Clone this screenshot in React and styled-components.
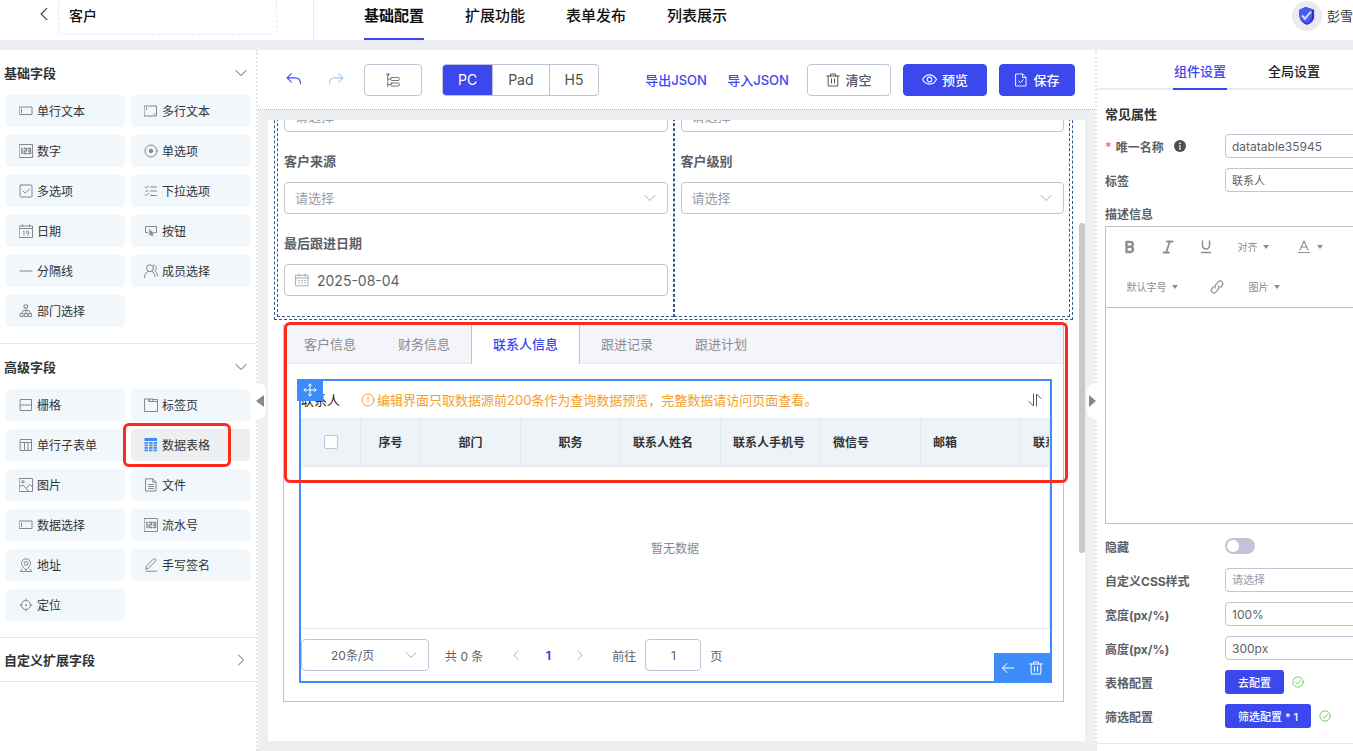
import React, { useState } from "react";
import styled, { createGlobalStyle, css } from "styled-components";

const GlobalStyle = createGlobalStyle`
  *, *::before, *::after {
    box-sizing: border-box;
  }
  body {
    margin: 0;
    font-family: Inter, "Noto Sans CJK SC", sans-serif;
    font-size: 13px;
    color: #303338;
    background: #eeeff4;
  }
  button, input, select, textarea {
    font: inherit;
    color: inherit;
  }
  button {
    padding: 0;
    border: 0;
    background: none;
    cursor: pointer;
  }
`;

const blue = "#3a48ee";
const line = "#c0c4d6";

/* ---------- icons ---------- */

const Svg = styled.svg`
  flex: none;
  display: block;
  fill: none;
  stroke: currentColor;
  stroke-width: ${({ $w }) => $w || 1};
  stroke-linecap: round;
  stroke-linejoin: round;
`;

const icons = {
  input: (
    <>
      <rect x="0.500" y="3" width="12.500" height="7.500" />
      <path d="M2.500 5v3.500" />
    </>
  ),
  textarea: (
    <>
      <rect x="0.500" y="2" width="12" height="10" />
      <path d="M2.500 4v1.500M10 10.500l1-1" />
    </>
  ),
  number: (
    <>
      <rect x="0.500" y="0.500" width="13" height="13" />
      <path strokeWidth="1.400" d="M2.500 4.500h.5v5M5.200 4.500h2.400v2.400H5.200v2.600h2.400M9.300 4.500h2.200v5H9.300M9.600 7h1.900" />
    </>
  ),
  radio: (
    <>
      <circle cx="7" cy="7" r="6" />
      <circle cx="7" cy="7" r="1.700" fill="currentColor" />
    </>
  ),
  checkbox: (
    <>
      <rect x="1" y="1" width="12" height="12" rx="1" />
      <path d="M4 7l2.200 2.200L10.500 5" />
    </>
  ),
  options: <path d="M6.500 3h6M6.500 7h6M6.500 11.500h6M1 3l1.200 1.200L4.500 2M1 10.500l1.200 1.200 2.300-2.300M2 7h2" />,
  date: (
    <>
      <path d="M.5 2h13v11.500H.5zM.5 4.500h13M3.500 .8v1.700M10.500 .8v1.700" />
      <path strokeWidth="0.900" d="M4.200 7.500l.8-.6v4.500M9.800 8.200a1.200 1.200 0 1 1-2.400 0 1.200 1.200 0 0 1 2.400 0c0 1.400-.5 2.800-1.700 3.200" />
    </>
  ),
  button: (
    <>
      <path d="M3.500 8.500H1.500v-6h11v6h-2" />
      <path fill="currentColor" strokeWidth="0.500" d="M5.500 5.500l4.300 3.800-1.600.3.800 2-1.300.5-.9-2-1.300.9z" />
    </>
  ),
  divider: <path strokeWidth="1.200" d="M1 7h12" />,
  user: (
    <>
      <circle cx="6" cy="4.200" r="3.400" />
      <path d="M.5 13.500c0-3.300 1.700-5.700 3.800-6M7.800 7.300c2 .6 3.200 2.700 3.200 5M9.500 1c2 .4 2.900 1.700 2.700 3.400-.1 1.100-.7 1.900-1.500 2.300 1.700.9 2.700 2.800 2.800 5.300" />
    </>
  ),
  org: (
    <>
      <rect x="5.500" y="1" width="3" height="3" />
      <rect x="1.500" y="9.500" width="2.500" height="3" />
      <rect x="5.700" y="9.500" width="2.500" height="3" />
      <rect x="10" y="9.500" width="2.500" height="3" />
      <path d="M7 4v5.500M2.700 9.500L4 6.500h6l1.300 3" />
    </>
  ),
  grid: <path d="M1.500 1.500h11v11h-11zM1.500 7h11" />,
  tabs: <path d="M.5 3.500v10h13v-10H5l-.5-2.500h-4zM5 3.500V1h4v2.500M9 1.500h4.500v2" />,
  subform: <path d="M1.500 1.500h11v11h-11zM1.500 4.500h11M5.500 4.500v8M9 4.500v8" />,
  image: (
    <>
      <rect x="0.500" y="0.500" width="13" height="13" />
      <circle cx="3.800" cy="3.800" r="1.200" />
      <path d="M.5 8.500L4 7l5.500 6M7.500 10.200l3-3.700 3 2.500" />
    </>
  ),
  file: <path d="M2 .8h7l3 3.200v9H2zM8.800 1v3.200H12M4.500 6.500h5M4.500 8.500h5M4.500 10.500h5" />,
  address: (
    <>
      <path d="M7 12C4 9.500 2.500 7.600 2.500 5.300a4.500 4.500 0 0 1 9 0C11.500 7.600 10 9.500 7 12zM3 11l-1.800 2.500h11.600L11 11" />
      <circle cx="7" cy="5.400" r="1.900" />
    </>
  ),
  sign: <path d="M1.800 10.800l.7-3L9.600 .9c.9-.8 2.900.8 2.100 2L4.700 10zM2 13.200h10.500" />,
  locate: (
    <>
      <circle cx="7" cy="7" r="4.600" />
      <circle cx="7" cy="7" r="0.400" />
      <path d="M7 1v2M7 11v2M1 7h2M11 7h2" />
    </>
  ),
  undo: <path d="M5 1.500L1 5.500l4 4M1 5.500h7.500c3 0 5 2 5 5.500" />,
  redo: <path d="M9 1.500l4 4-4 4M13 5.500H5.500c-3 0-5 2-5 5.500" />,
  tree: (
    <>
      <circle cx="1.800" cy="1.500" r="1.100" />
      <path d="M1.800 2.600v11M1.800 6h3M1.800 11.500h3" />
      <rect x="4.800" y="4.500" width="8.500" height="3" rx="1" />
      <rect x="4.800" y="10" width="8.500" height="3" rx="1" />
    </>
  ),
  trash: <path d="M.8 3h12.400M4.500 3V1h5v2M2.200 3v10h9.600V3M5.500 5.800v4.400M8.500 5.800v4.400" />,
  eye: (
    <>
      <path d="M.5 7C2 4.300 4.300 2.700 7 2.700S12 4.300 13.500 7c-1.500 2.700-3.800 4.300-6.500 4.300S2 9.700.5 7z" />
      <circle cx="7" cy="7" r="2.200" />
    </>
  ),
  save: <path d="M2 1h6.500L12 4.500V13H2zM8.500 1v3.500H12M4.700 8l1.700 1.700 3-3" />,
  calendar: (
    <path d="M1 2.200h12v10.600H1zM1 5h12M4 1v2.200M10 1v2.200M3.800 7.500h.9M6.600 7.500h.9M9.400 7.500h.9M3.800 10h.9M6.600 10h.9M9.400 10h.9" />
  ),
  warn: (
    <>
      <circle cx="7" cy="7" r="6" />
      <path d="M7 3.500v4.500M7 10v.2" />
    </>
  ),
  sort: <path d="M5.500 1v12L1 8.500M8.500 13V1L13 5.500" />,
  move: (
    <path d="M7 1v12M1 7h12M5.500 2.500L7 1l1.500 1.500M5.500 11.500L7 13l1.500-1.500M2.500 5.500L1 7l1.500 1.500M11.500 5.500L13 7l-1.500 1.500" />
  ),
  back: <path d="M12.500 7h-11M6 2.500L1.500 7 6 11.500" />,
  success: (
    <>
      <circle cx="7" cy="7" r="6" />
      <path d="M4.200 7.200l2 2 3.600-3.800" />
    </>
  ),
  link: (
    <path d="M5.800 8.200a2.600 2.600 0 0 1 0-3.600l2.500-2.700a2.500 2.500 0 0 1 3.700 3.600L10.600 7M8.200 5.800a2.600 2.600 0 0 1 0 3.600l-2.500 2.700A2.500 2.500 0 0 1 2 8.500L3.400 7" />
  ),
  down: <path d="M2 4.500l5 5 5-5" />,
  right: <path d="M4.500 2l5 5-5 5" />,
  left: <path d="M9.500 2l-5 5 5 5" />,
};

const Icon = ({ name, size = 14, w }) => (
  <Svg width={size} height={size} viewBox="0 0 14 14" $w={w} aria-hidden="true">
    {icons[name]}
  </Svg>
);

const TableIcon = () => (
  <svg width="14" height="14" viewBox="0 0 14 14" fill="#3e8bfa" aria-hidden="true">
    <rect x="0.500" y="0" width="12.500" height="3" />
    {[4, 6.5, 9, 11.500].map((y) =>
      [0.5, 5, 9.500].map((x) => <rect key={`${x}-${y}`} x={x} y={y} width="3.500" height="1.800" />)
    )}
  </svg>
);

const Shield = () => (
  <svg width="18" height="20" viewBox="0 0 18 20" aria-hidden="true">
    <path d="M11 2l6 1.500v8c0 3-2 5-5 6.500z" fill="#c9d2ee" />
    <path d="M7.500 1L16 3.800v7c0 4-3.500 6.800-7 8.200C4.500 17 2 14.500 1.500 11L1 4z" fill="#2a33c9" />
    <path d="M7.500 1L14 3.200v7.300c0 3.200-2.500 5.500-5 6.800C4.500 15.500 2 13.500 1.500 11L1 4z" fill="#4a5cf0" />
    <path d="M4 9.500l3 3.200 6-7" fill="none" stroke="#d5ddff" strokeWidth="2" />
  </svg>
);

/* ---------- page ---------- */

const Page = styled.div`
  display: flex;
  flex-direction: column;
  height: 100vh;
  overflow: hidden;
`;

const Header = styled.header`
  display: flex;
  flex: none;
  height: 40px;
  margin-bottom: 10px;
  background: #fff;
`;

const TitleArea = styled.div`
  display: flex;
  align-items: flex-start;
  gap: 6px;
  width: 314px;
  padding-left: 36px;
  border-right: 1px solid #e8eaf0;
`;

const BackButton = styled.button`
  height: 28px;
  color: #44474d;
`;

const TitleInput = styled.input`
  width: 219px;
  height: 35px;
  padding: 0 10px 4px;
  border: 1px dashed #e6e8ee;
  border-top: 0;
  border-radius: 0 0 5px 5px;
  outline: none;
  font-size: 14px;
  font-weight: 500;
  color: #111;
`;

const MainTabs = styled.nav`
  display: flex;
  gap: 41px;
  padding-left: 50px;
`;

const MainTab = styled.a`
  height: 40px;
  padding-top: 4px;
  line-height: 23px;
  font-size: 15px;
  font-weight: ${({ $active }) => ($active ? 700 : 500)};
  color: #111;
  text-decoration: none;
  border-bottom: 2px solid ${({ $active }) => ($active ? blue : "transparent")};
`;

const User = styled.div`
  display: flex;
  align-items: center;
  gap: 5px;
  height: 31px;
  margin-left: auto;
  white-space: nowrap;
`;

const Avatar = styled.span`
  display: flex;
  align-items: center;
  justify-content: center;
  width: 30px;
  height: 30px;
  border-radius: 50%;
  background: #ebebed;
`;

const Body = styled.div`
  display: flex;
  flex: 1;
  min-height: 0;
`;

/* ---------- left panel ---------- */

const Sidebar = styled.aside`
  flex: none;
  width: 258px;
  background: #fff;
  border-right: 2px dotted #e2e4f0;
`;

const Section = styled.section`
  border-bottom: 1px solid #e4e6f0;
  padding-bottom: ${({ $open }) => ($open ? 16 : 0)}px;
`;

const SectionHead = styled.button`
  display: flex;
  align-items: center;
  justify-content: space-between;
  width: 100%;
  height: ${({ $open }) => ($open ? 45 : 43)}px;
  padding: 0 8px 0 4px;
  font-weight: 700;
  svg {
    color: #55585e;
  }
`;

const FieldGrid = styled.div`
  display: grid;
  grid-template-columns: 1fr 1fr;
  gap: 8px 6px;
  padding: 0 6px;
`;

const FieldSlot = styled.div`
  position: relative;
`;

const Field = styled.button`
  display: flex;
  align-items: center;
  gap: 4px;
  width: 100%;
  height: 32px;
  padding: 0 0 1px 13px;
  border-radius: 4px;
  font-size: 12px;
  background: ${({ $active }) => ($active ? "#eeeff1" : "#f1f7fb")};
  svg {
    color: #85888f;
  }
`;

const Mark = styled.div`
  position: absolute;
  z-index: 3;
  border: 3px solid #fa2c1f;
  border-radius: 6px;
  pointer-events: none;
`;

const FieldMark = styled(Mark)`
  top: -6px;
  left: -8px;
  width: 108px;
  height: 44px;
`;

const basicFields = [
  ["input", "单行文本"],
  ["textarea", "多行文本"],
  ["number", "数字"],
  ["radio", "单选项"],
  ["checkbox", "多选项"],
  ["options", "下拉选项"],
  ["date", "日期"],
  ["button", "按钮"],
  ["divider", "分隔线"],
  ["user", "成员选择"],
  ["org", "部门选择"],
];

const advancedFields = [
  ["grid", "栅格"],
  ["tabs", "标签页"],
  ["subform", "单行子表单"],
  ["datatable", "数据表格"],
  ["image", "图片"],
  ["file", "文件"],
  ["input", "数据选择"],
  ["number", "流水号"],
  ["address", "地址"],
  ["sign", "手写签名"],
  ["locate", "定位"],
];

const FieldSection = ({ title, fields }) => {
  const [open, setOpen] = useState(Boolean(fields));
  const shown = open && fields;
  return (
    <Section $open={shown}>
      <SectionHead $open={shown} onClick={() => setOpen(!open)}>
        {title}
        <Icon name={shown ? "down" : "right"} />
      </SectionHead>
      {shown && (
        <FieldGrid>
          {fields.map(([icon, label]) => (
            <FieldSlot key={label}>
              <Field $active={icon === "datatable"}>
                {icon === "datatable" ? <TableIcon /> : <Icon name={icon} />}
                {label}
              </Field>
              {icon === "datatable" && <FieldMark />}
            </FieldSlot>
          ))}
        </FieldGrid>
      )}
    </Section>
  );
};

/* ---------- designer ---------- */

const Designer = styled.main`
  position: relative;
  display: flex;
  flex-direction: column;
  flex: 1;
  min-width: 0;
  background: #eeeff1;
`;

const Toolbar = styled.div`
  display: flex;
  align-items: center;
  gap: 20px;
  flex: none;
  height: 60px;
  padding: 0 20px 0 28px;
  background: #fff;
  border-bottom: 1px dotted #b4b7c0;
`;

const History = styled.div`
  display: flex;
  gap: 28px;
`;

const IconButton = styled.button`
  color: ${({ $off }) => ($off ? "#a0cbfb" : blue)};
`;

const Button = styled.button`
  display: flex;
  align-items: center;
  justify-content: center;
  gap: 5px;
  width: ${({ $width }) => $width}px;
  height: 32px;
  border: 1px solid ${line};
  border-radius: 4px;
  font-weight: 500;
  color: #55585e;
  ${({ $primary }) =>
    $primary &&
    css`
      color: #fff;
      background: ${blue};
      border-color: ${blue};
    `}
`;

const DeviceGroup = styled.div`
  display: flex;
  height: 32px;
  border: 1px solid ${line};
  border-radius: 4px;
  overflow: hidden;
`;

const Device = styled.button`
  padding: 0 15px;
  font-size: 14px;
  color: #4c4f56;
  & + & {
    border-left: 1px solid ${line};
  }
  ${({ $active }) =>
    $active &&
    css`
      color: #fff;
      background: ${blue};
    `}
`;

const Actions = styled.div`
  display: flex;
  align-items: center;
  gap: 12px;
  margin-left: auto;
`;

const TextButton = styled.button`
  min-width: 66px;
  margin-right: 4px;
  font-weight: 500;
  color: ${blue};
`;

const Canvas = styled.div`
  position: relative;
  flex: 1;
  min-height: 0;
  margin: 10px;
  padding: 0 12px 0 6px;
  background: #fff;
  overflow: hidden;
`;

const ScrollThumb = styled.div`
  position: absolute;
  top: 103px;
  right: 0;
  width: 6px;
  height: 330px;
  border-radius: 3px;
  background: #c9c9c9;
`;

/* the form is scrolled down by 30px */
const FormGrid = styled.div`
  display: grid;
  grid-template-columns: 1fr 1fr;
  margin-top: -30px;
  padding: 2px;
  border: 1px dashed #33588f;
`;

const FormCell = styled.div`
  display: flex;
  flex-direction: column;
  gap: 18px;
  padding: 6px 5px 20px 6px;
  border: 1px dashed #33588f;
`;

const FormItem = styled.label`
  display: flex;
  flex-direction: column;
  gap: 10px;
  line-height: 22px;
  font-weight: 700;
  color: #5c5f66;
`;

const ControlBox = styled.span`
  position: relative;
  display: flex;
  align-items: center;
  width: ${({ $width }) => ($width ? `${$width}px` : "auto")};
  font-weight: 400;
  color: #a8abb2;
  svg {
    position: absolute;
    ${({ $left }) => ($left ? "left: 11px;" : "right: 11px;")}
    pointer-events: none;
  }
`;

const Select = styled.select`
  appearance: none;
  width: 100%;
  height: 32px;
  padding: 0 30px 0 ${({ $pad }) => $pad || 10}px;
  border: 1px solid ${line};
  border-radius: 4px;
  outline: none;
  background: #fff;
  color: ${({ $filled }) => ($filled ? "#5c5f66" : "#9a9da6")};
`;

const DateInput = styled.input`
  width: 100%;
  height: 32px;
  padding: 0 10px 0 32px;
  border: 1px solid ${line};
  border-radius: 4px;
  outline: none;
  font-size: 14px;
  color: #5c5f66;
`;

const FormSelect = ({ label }) => (
  <FormItem>
    {label}
    <ControlBox>
      <Select aria-label={label || "下拉选项"}>
        <option>请选择</option>
      </Select>
      <Icon name="down" />
    </ControlBox>
  </FormItem>
);

const TabsCard = styled.div`
  position: relative;
  margin: 4px 9px 0;
  border: 1px solid #bfc1cb;
  border-top: 0;
`;

const TabBar = styled.div`
  display: flex;
  height: 40px;
  background: #f4f5fa;
  border-bottom: 1px solid #e8eaf1;
`;

const CardTab = styled.button`
  height: 40px;
  padding: 0 21px 2px 20px;
  color: #8a8d94;
  & + & {
    padding-left: 21px;
  }
  ${({ $active }) =>
    $active &&
    css`
      color: ${blue};
      font-weight: 500;
      background: #fff;
      border: solid ${line};
      border-width: 0 1px;
    `}
`;

const TabPane = styled.div`
  padding: 15px 11px 18px 15px;
`;

const CanvasMark = styled(Mark)`
  top: -2px;
  left: 0;
  right: -5px;
  height: 161px;
`;

const Widget = styled.div`
  position: relative;
  display: flex;
  flex-direction: column;
  height: 304px;
  border: 2px solid #3e8bfa;
`;

const MoveHandle = styled.span`
  position: absolute;
  top: -2px;
  left: -4px;
  display: flex;
  align-items: center;
  justify-content: center;
  width: 26px;
  height: 22px;
  color: #fff;
  background: #3e8bfa;
`;

const WidgetTools = styled.div`
  position: absolute;
  right: -2px;
  bottom: -2px;
  display: flex;
  align-items: center;
  gap: 14px;
  height: 30px;
  padding: 0 9px 0 7px;
  color: #fff;
  background: #3e8bfa;
  button {
    color: inherit;
  }
`;

const WidgetHead = styled.div`
  display: flex;
  align-items: center;
  height: 37px;
  padding-right: 8px;
  color: #222;
`;

const Tip = styled.span`
  display: flex;
  align-items: center;
  gap: 2px;
  margin-left: 21px;
  color: #f5a02c;
`;

const SortButton = styled.button`
  margin-left: auto;
  color: #55585e;
`;

const TableBox = styled.div`
  display: flex;
  flex-direction: column;
  flex: 1;
  border: 1px solid #e8eaf3;
  border-left: 0;
  overflow: hidden;
`;

const Table = styled.table`
  table-layout: fixed;
  width: 820px;
  border-collapse: separate;
  border-spacing: 0;
  font-size: 12px;
`;

const Th = styled.th`
  width: ${({ $width }) => $width || 100}px;
  height: 48px;
  padding: 0 12px 2px;
  text-align: ${({ $left }) => ($left ? "left" : "center")};
  font-weight: 700;
  color: #303338;
  white-space: nowrap;
  background: #eef3f7;
  border-right: 1px solid #e2e6f0;
  border-bottom: 1px solid #e2e6f0;
`;

const CheckBox = styled.input`
  appearance: none;
  display: block;
  width: 14px;
  height: 14px;
  margin: 0 auto;
  border: 1px solid ${line};
  border-radius: 2px;
  background: #fff;
`;

const Empty = styled.div`
  display: flex;
  align-items: center;
  justify-content: center;
  flex: 1;
  font-size: 12px;
  color: #85888f;
`;

const Pager = styled.div`
  display: flex;
  align-items: center;
  height: 52px;
  font-size: 12px;
  color: #5c5f66;
`;

const Total = styled.span`
  margin: 0 17px 0 16px;
`;

const PageButton = styled.button`
  display: flex;
  align-items: center;
  justify-content: center;
  width: 32px;
  height: 32px;
  font-weight: 700;
  color: ${({ $active }) => ($active ? blue : "#a8abb2")};
`;

const Jump = styled.label`
  display: flex;
  align-items: center;
  gap: 9px;
  margin-left: 16px;
`;

const JumpInput = styled.input`
  width: 56px;
  height: 32px;
  border: 1px solid ${line};
  border-radius: 4px;
  outline: none;
  text-align: center;
`;

const Collapse = styled.button`
  position: absolute;
  z-index: 4;
  top: 333px;
  ${({ $side }) => ($side === "left" ? "left: -2px;" : "right: -2px;")}
  width: 10px;
  height: 36px;
  background: #fff;
  border-radius: ${({ $side }) => ($side === "left" ? "0 8px 8px 0" : "8px 0 0 8px")};
  svg {
    display: block;
  }
`;

const columns = [
  { title: "序号", width: 60 },
  { title: "部门" },
  { title: "职务" },
  { title: "联系人姓名", left: true },
  { title: "联系人手机号", left: true },
  { title: "微信号", left: true },
  { title: "邮箱", left: true },
  { title: "联系地址", left: true },
];

const cardTabs = ["客户信息", "财务信息", "联系人信息", "跟进记录", "跟进计划"];

const DataTable = () => (
  <Widget>
    <WidgetHead>
      联系人
      <Tip>
        <Icon name="warn" />
        编辑界面只取数据源前200条作为查询数据预览，完整数据请访问页面查看。
      </Tip>
      <SortButton aria-label="排序">
        <Icon name="sort" />
      </SortButton>
    </WidgetHead>
    <TableBox>
      <Table>
        <thead>
          <tr>
            <Th $width={60}>
              <CheckBox type="checkbox" aria-label="全选" />
            </Th>
            {columns.map((col) => (
              <Th key={col.title} $width={col.width} $left={col.left}>
                {col.title}
              </Th>
            ))}
          </tr>
        </thead>
      </Table>
      <Empty>暂无数据</Empty>
    </TableBox>
    <Pager>
      <ControlBox $width={128}>
        <Select $pad={29} $filled aria-label="每页条数">
          <option>20条/页</option>
        </Select>
        <Icon name="down" />
      </ControlBox>
      <Total>共 0 条</Total>
      <PageButton aria-label="上一页" disabled>
        <Icon name="left" size={12} />
      </PageButton>
      <PageButton $active>1</PageButton>
      <PageButton aria-label="下一页" disabled>
        <Icon name="right" size={12} />
      </PageButton>
      <Jump>
        前往
        <JumpInput defaultValue="1" />
        页
      </Jump>
    </Pager>
    <MoveHandle>
      <Icon name="move" />
    </MoveHandle>
    <WidgetTools>
      <button aria-label="选择父组件">
        <Icon name="back" />
      </button>
      <button aria-label="删除">
        <Icon name="trash" />
      </button>
    </WidgetTools>
  </Widget>
);

/* ---------- right panel ---------- */

const Settings = styled.aside`
  flex: none;
  width: 258px;
  background: #fff;
  border-left: 2px dotted #e2e4f0;
  overflow: hidden;
`;

const SettingsInner = styled.div`
  width: 300px;
`;

const SettingsTabs = styled.div`
  display: flex;
  justify-content: center;
  gap: 40px;
  height: 40px;
  border-bottom: 2px solid #eceef4;
`;

const SettingsTab = styled.button`
  min-width: 54px;
  height: 40px;
  padding-top: 3px;
  font-weight: 500;
  color: ${({ $active }) => ($active ? blue : "#222")};
  border-bottom: 2px solid ${({ $active }) => ($active ? blue : "transparent")};
`;

const Props = styled.div`
  padding: 10px 8px;
  border-bottom: 1px solid #e4e6f0;
`;

const PropsTitle = styled.h3`
  margin: 0;
  font-size: 13px;
  line-height: 29px;
`;

const Row = styled.div`
  display: flex;
  align-items: center;
  height: ${({ $short }) => ($short ? 29 : 34)}px;
  padding-top: ${({ $short }) => ($short ? 4 : 0)}px;
`;

const RowLabel = styled.label`
  display: flex;
  align-items: center;
  flex: none;
  width: 120px;
  font-size: 12px;
  font-weight: 700;
  color: #5c5f66;
  i {
    margin-right: 4px;
    font-style: normal;
    color: #f56c6c;
  }
  svg {
    margin-left: 10px;
  }
`;

const inputStyle = css`
  flex: 1;
  min-width: 0;
  height: 24px;
  padding: 0 6px;
  border: 1px solid ${line};
  border-radius: 4px;
  outline: none;
  background: #fff;
`;

const TextInput = styled.input`
  ${inputStyle}
  font-size: ${({ $small }) => ($small ? 11 : 12)}px;
  color: #5c5f66;
`;

const SmallSelect = styled.select`
  ${inputStyle}
  appearance: none;
  font-size: 11px;
  color: #9a9da6;
`;

const Editor = styled.div`
  margin-bottom: 5px;
  border: 1px solid #c0c1c5;
`;

const EditorBar = styled.div`
  padding: 0 10px 0 5px;
  border-bottom: 1px solid #c0c1c5;
`;

const EditorRow = styled.div`
  display: flex;
  align-items: center;
  height: 40px;
`;

const EditorButton = styled.button`
  display: flex;
  align-items: center;
  justify-content: center;
  gap: 5px;
  width: ${({ $width }) => $width || 38}px;
  height: 40px;
  padding-bottom: 1px;
  font-size: 10px;
  color: #8e8e8e;
`;

const Caret = styled.span`
  border: 3px solid transparent;
  border-top: 4px solid #8e8e8e;
  border-bottom: 0;
`;

const EditorText = styled.textarea`
  display: block;
  width: 100%;
  height: 215px;
  border: 0;
  outline: none;
  resize: none;
`;

const Switch = styled.input`
  appearance: none;
  width: 30px;
  height: 16px;
  margin: 0;
  padding: 2px;
  border-radius: 8px;
  background: ${line};
  &::before {
    content: "";
    display: block;
    width: 12px;
    height: 12px;
    border-radius: 50%;
    background: #fff;
  }
`;

const SmallButton = styled.button`
  height: 24px;
  padding: 0 13px;
  margin-right: 8px;
  border-radius: 3px;
  font-size: 11px;
  font-weight: 500;
  color: #fff;
  background: ${blue};
`;

const Done = styled.span`
  color: #5fc94a;
`;

const FormatIcon = ({ kind }) => (
  <Svg width="16" height="16" viewBox="0 0 16 16" $w={kind === "bold" ? 2 : 1.5} aria-hidden="true">
    {kind === "bold" && <path strokeWidth="2.400" d="M4.500 3v10h4.300a2.700 2.700 0 0 0 0-5.300H4.500M4.500 3h4a2.300 2.300 0 0 1 0 4.700" />}
    {kind === "italic" && <path d="M7 2.500h5.500M3.500 13.500H9M9.800 2.500l-3.600 11" strokeWidth="1.800" />}
    {kind === "under" && <path d="M4.500 2v4.500a3.500 3.500 0 0 0 7 0V2M3.500 13.500h9" />}
    {kind === "color" && <path strokeWidth="1.100" d="M4 11L8 2l4 9M5.300 8h5.400M2.500 13.500h11" />}
  </Svg>
);

const InfoIcon = () => (
  <svg width="12" height="12" viewBox="0 0 12 12" aria-hidden="true">
    <circle cx="6" cy="6" r="6" fill="#4c4f56" />
    <path d="M6 5.500V9M5 5.500h1M5 9h2" stroke="#fff" fill="none" />
    <circle cx="6" cy="3.300" r="0.900" fill="#fff" />
  </svg>
);

const SettingsPanel = () => (
  <Settings>
    <SettingsInner>
      <SettingsTabs>
        <SettingsTab $active>组件设置</SettingsTab>
        <SettingsTab>全局设置</SettingsTab>
      </SettingsTabs>
      <Props>
        <PropsTitle>常见属性</PropsTitle>
        <Row>
          <RowLabel htmlFor="name">
            <i>*</i>唯一名称
            <InfoIcon />
          </RowLabel>
          <TextInput id="name" defaultValue="datatable35945" />
        </Row>
        <Row>
          <RowLabel htmlFor="label">标签</RowLabel>
          <TextInput id="label" $small defaultValue="联系人" />
        </Row>
        <Row $short>
          <RowLabel htmlFor="desc">描述信息</RowLabel>
        </Row>
        <Editor>
          <EditorBar>
            <EditorRow>
              <EditorButton aria-label="加粗"><FormatIcon kind="bold" /></EditorButton>
              <EditorButton aria-label="斜体"><FormatIcon kind="italic" /></EditorButton>
              <EditorButton aria-label="下划线"><FormatIcon kind="under" /></EditorButton>
              <EditorButton $width={56}>对齐<Caret /></EditorButton>
              <EditorButton $width={56} aria-label="文字颜色"><FormatIcon kind="color" /><Caret /></EditorButton>
            </EditorRow>
            <EditorRow>
              <EditorButton $width={82}>默认字号<Caret /></EditorButton>
              <EditorButton $width={48} aria-label="链接"><Icon name="link" w={1.2} /></EditorButton>
              <EditorButton $width={46}>图片<Caret /></EditorButton>
            </EditorRow>
          </EditorBar>
          <EditorText id="desc" />
        </Editor>
        <Row>
          <RowLabel htmlFor="hidden">隐藏</RowLabel>
          <Switch id="hidden" type="checkbox" role="switch" />
        </Row>
        <Row>
          <RowLabel htmlFor="css">自定义CSS样式</RowLabel>
          <SmallSelect id="css">
            <option>请选择</option>
          </SmallSelect>
        </Row>
        <Row>
          <RowLabel htmlFor="width">宽度(px/%)</RowLabel>
          <TextInput id="width" defaultValue="100%" />
        </Row>
        <Row>
          <RowLabel htmlFor="height">高度(px/%)</RowLabel>
          <TextInput id="height" defaultValue="300px" />
        </Row>
        <Row>
          <RowLabel htmlFor="table">表格配置</RowLabel>
          <SmallButton id="table">去配置</SmallButton>
          <Done><Icon name="success" size={12} /></Done>
        </Row>
        <Row>
          <RowLabel htmlFor="filter">筛选配置</RowLabel>
          <SmallButton id="filter">筛选配置 * 1</SmallButton>
          <Done><Icon name="success" size={12} /></Done>
        </Row>
      </Props>
    </SettingsInner>
  </Settings>
);

const App = () => {
  const [device, setDevice] = useState("PC");

  return (
    <Page>
      <GlobalStyle />
      <Header>
        <TitleArea>
          <BackButton aria-label="返回">
            <Icon name="left" size={16} />
          </BackButton>
          <TitleInput aria-label="表单名称" defaultValue="客户" />
        </TitleArea>
        <MainTabs>
          {["基础配置", "扩展功能", "表单发布", "列表展示"].map((name, i) => (
            <MainTab key={name} href="#" $active={i === 0}>
              {name}
            </MainTab>
          ))}
        </MainTabs>
        <User>
          <Avatar>
            <Shield />
          </Avatar>
          彭雪
        </User>
      </Header>

      <Body>
        <Sidebar>
          <FieldSection title="基础字段" fields={basicFields} />
          <FieldSection title="高级字段" fields={advancedFields} />
          <FieldSection title="自定义扩展字段" />
        </Sidebar>

        <Designer>
          <Toolbar>
            <History>
              <IconButton aria-label="撤销">
                <Icon name="undo" size={15} />
              </IconButton>
              <IconButton aria-label="重做" $off>
                <Icon name="redo" size={15} />
              </IconButton>
            </History>
            <Button $width={58} aria-label="组件树">
              <Icon name="tree" w={0.8} />
            </Button>
            <DeviceGroup>
              {["PC", "Pad", "H5"].map((d) => (
                <Device key={d} $active={d === device} onClick={() => setDevice(d)}>
                  {d}
                </Device>
              ))}
            </DeviceGroup>
            <Actions>
              <TextButton>导出JSON</TextButton>
              <TextButton>导入JSON</TextButton>
              <Button $width={84}>
                <Icon name="trash" />
                清空
              </Button>
              <Button $width={84} $primary>
                <Icon name="eye" size={15} />
                预览
              </Button>
              <Button $width={76} $primary>
                <Icon name="save" w={0.9} />
                保存
              </Button>
            </Actions>
          </Toolbar>

          <Canvas>
            <FormGrid>
              <FormCell>
                <FormSelect />
                <FormSelect label="客户来源" />
                <FormItem>
                  最后跟进日期
                  <ControlBox $left>
                    <DateInput defaultValue="2025-08-04" />
                    <Icon name="calendar" />
                  </ControlBox>
                </FormItem>
              </FormCell>
              <FormCell>
                <FormSelect />
                <FormSelect label="客户级别" />
              </FormCell>
            </FormGrid>
            <TabsCard>
              <TabBar>
                {cardTabs.map((name) => (
                  <CardTab key={name} $active={name === "联系人信息"}>
                    {name}
                  </CardTab>
                ))}
              </TabBar>
              <TabPane>
                <DataTable />
              </TabPane>
              <CanvasMark />
            </TabsCard>
            <ScrollThumb />
          </Canvas>

          <Collapse $side="left" aria-label="收起左侧">
            <svg width="8" height="12" viewBox="0 0 8 12">
              <path d="M8 0v12L0 6z" fill="#85888f" />
            </svg>
          </Collapse>
          <Collapse $side="right" aria-label="收起右侧">
            <svg width="10" height="12" viewBox="0 0 10 12">
              <path d="M2 0v12l7-6z" fill="#85888f" />
            </svg>
          </Collapse>
        </Designer>

        <SettingsPanel />
      </Body>
    </Page>
  );
};

export default App;
